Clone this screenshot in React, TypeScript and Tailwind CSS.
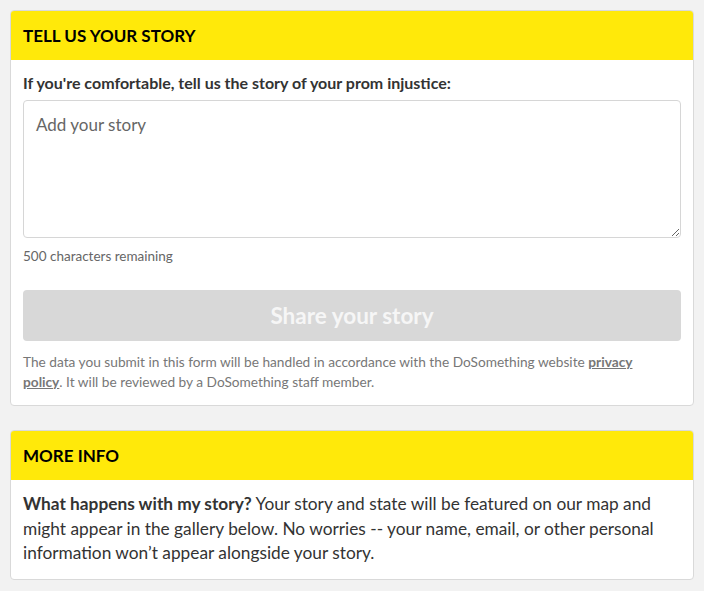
export default function App() {
  return (
    <div
      className="min-h-[591px] bg-[#f2f2f2] px-[10px] py-[10px]"
      style={{ fontFamily: "Lato, 'Open Sans', sans-serif" }}
    >
      <section className="overflow-hidden rounded-[4px] border border-[#d9d9d9] bg-white">
        <div className="flex h-[49px] items-center bg-[#ffe90a] px-3">
          <h2 className="text-[17px] font-bold uppercase text-black">Tell us your story</h2>
        </div>
        <div className="px-3 pt-[13px] pb-[13px]">
          <label className="block text-[16px] font-bold leading-[20px] text-[#333]">
            If you're comfortable, tell us the story of your prom injustice:
          </label>
          <textarea
            placeholder="Add your story"
            className="mt-[7px] block h-[138px] w-full rounded-[4px] border border-[#d6d6d6] px-3 pt-[11px] text-[17px] text-[#333] placeholder:text-[#666]"
          />
          <p className="mt-[9px] text-[13.5px] leading-[18px] text-[#666]">500 characters remaining</p>
          <button
            disabled
            className="mt-[25px] flex h-[51px] w-full items-center justify-center rounded-[4px] bg-[#d8d8d8] text-[22.5px] font-bold text-[#f6f6f6]"
          >
            Share your story
          </button>
          <p className="mt-[11px] pr-[20px] text-[13.7px] leading-[20px] text-[#777]">
            The data you submit in this form will be handled in accordance with the DoSomething website{" "}
            <a className="font-bold text-[#777] underline">privacy policy</a>. It will be reviewed by a DoSomething
            staff member.
          </p>
        </div>
      </section>

      <section className="mt-[24px] overflow-hidden rounded-[4px] border border-[#d9d9d9] bg-white">
        <div className="flex h-[49px] items-center bg-[#ffe90a] px-3">
          <h2 className="text-[17px] font-bold uppercase text-black">More info</h2>
        </div>
        <div className="px-3 pt-[12px] pb-[13px]">
          <p className="text-[17.3px] leading-[24.7px] text-[#333]">
            <strong className="font-bold">What happens with my story?</strong> Your story and state will be featured
            on our map and might appear in the gallery below. No worries -- your name, email, or other personal
            information won’t appear alongside your story.
          </p>
        </div>
      </section>
    </div>
  );
}
